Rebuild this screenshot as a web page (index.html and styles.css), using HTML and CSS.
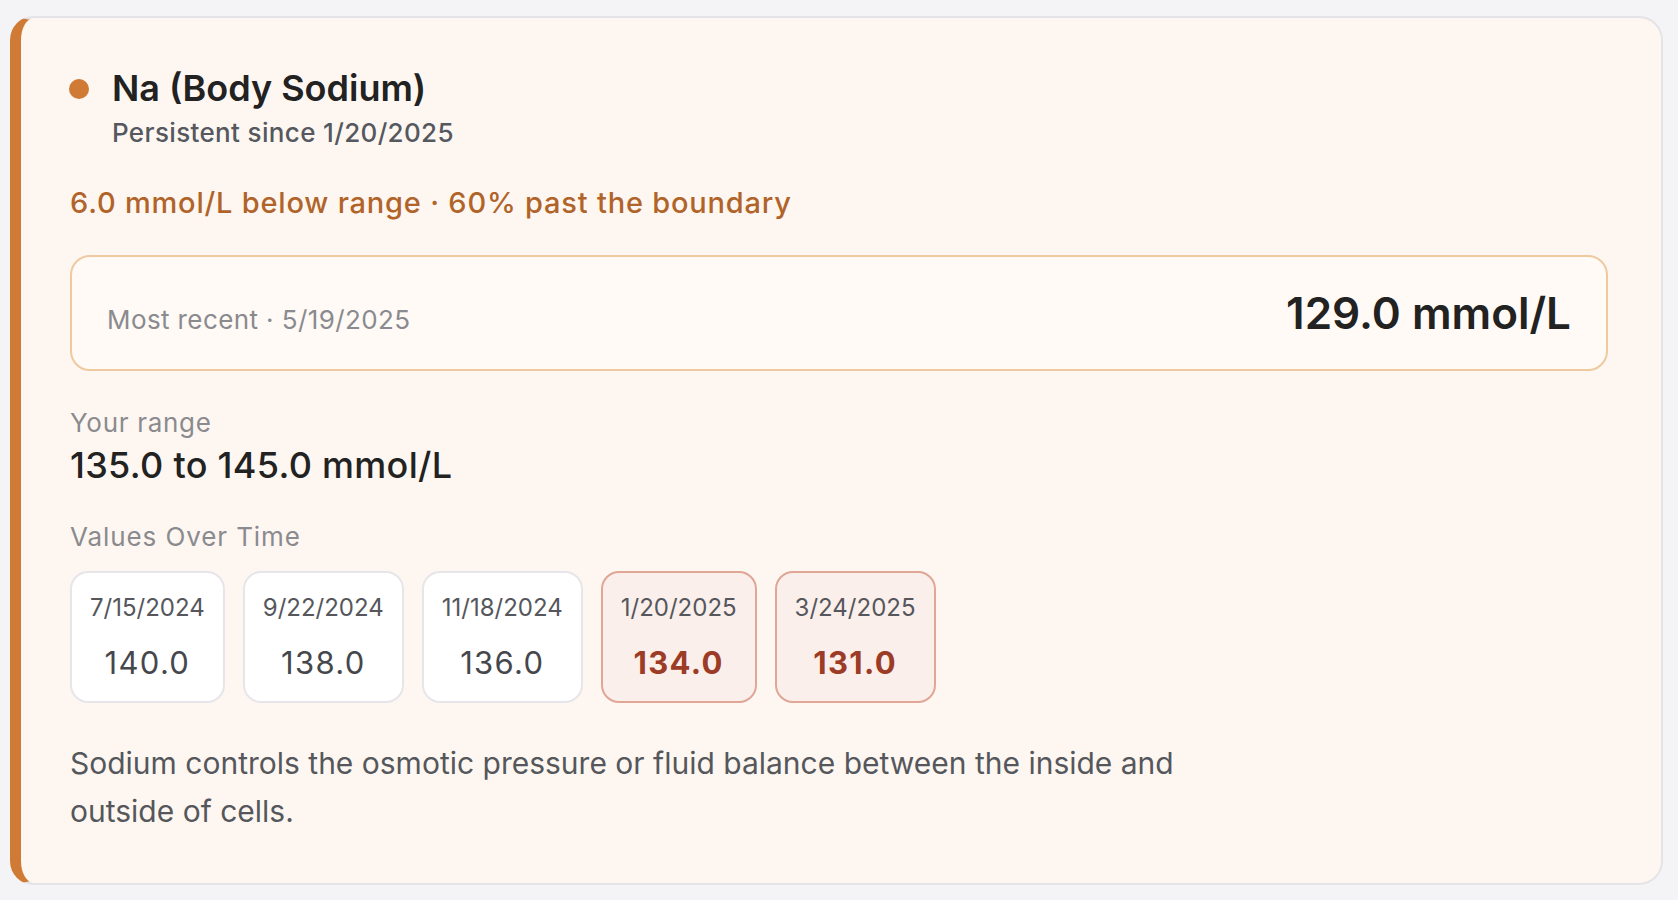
FILE: index.html
```html
<!DOCTYPE html>
<html lang="en">
<head>
<meta charset="utf-8">
<title>Na (Body Sodium)</title>
<link rel="stylesheet" href="styles.css">
</head>
<body>
<main class="page">
  <section class="card">
    <header class="card-head">
      <span class="dot"></span>
      <div class="head-text">
        <h1 class="title">Na (Body Sodium)</h1>
        <p class="subtitle">Persistent since 1/20/2025</p>
      </div>
    </header>
    <p class="alert">6.0 mmol/L below range · 60% past the boundary</p>
    <div class="recent">
      <span class="recent-label">Most recent · 5/19/2025</span>
      <span class="recent-value">129.0 mmol/L</span>
    </div>
    <div class="range">
      <div class="range-label">Your range</div>
      <div class="range-value">135.0 to 145.0 mmol/L</div>
    </div>
    <div class="history">
      <div class="history-label">Values Over Time</div>
      <div class="chips">
        <div class="chip"><span class="chip-date">7/15/2024</span><span class="chip-value">140.0</span></div>
        <div class="chip"><span class="chip-date">9/22/2024</span><span class="chip-value">138.0</span></div>
        <div class="chip"><span class="chip-date">11/18/2024</span><span class="chip-value">136.0</span></div>
        <div class="chip chip-out"><span class="chip-date">1/20/2025</span><span class="chip-value">134.0</span></div>
        <div class="chip chip-out"><span class="chip-date">3/24/2025</span><span class="chip-value">131.0</span></div>
      </div>
    </div>
    <p class="desc">Sodium controls the osmotic pressure or fluid balance between the inside and outside of cells.</p>
  </section>
</main>
</body>
</html>
```

FILE: styles.css
```css
* { box-sizing: border-box; }
html, body { margin: 0; padding: 0; }
body {
  background: #f4f4f6;
  font-family: Inter, "Noto Sans", "Liberation Sans", sans-serif;
  color: #222;
}
.page {
  padding: 16px 15px 15px 10px;
}
.card {
  background: #fef7f1;
  border: 2px solid #e4e4e8;
  border-left: 11px solid #cf7a35;
  border-radius: 24px;
  padding: 48px 53px 47px 49px;
  height: 869px;
}
.card-head {
  display: flex;
  align-items: flex-start;
  gap: 23px;
}
.dot {
  width: 20px;
  height: 20px;
  border-radius: 50%;
  background: #cf7a35;
  margin-top: 13px;
  flex: none;
  margin-left: -1px;
}
.title {
  margin: 0;
  font-size: 36px;
  line-height: 44px;
  font-weight: 600;
  color: #222;
}
.subtitle {
  margin: 6px 0 0;
  font-size: 26px;
  line-height: 34px;
  font-weight: 500;
  color: #55585e;
  letter-spacing: 0.35px;
}
.alert {
  margin: 33px 0 0;
  font-size: 29px;
  line-height: 40px;
  font-weight: 500;
  color: #b0642a;
  letter-spacing: 0.8px;
}
.recent {
  margin-top: 32px;
  display: flex;
  justify-content: space-between;
  align-items: baseline;
  background: #fffaf5;
  border: 2px solid #efc9a0;
  border-radius: 20px;
  padding: 29px 35px;
  height: 116px;
}
.recent-label {
  font-size: 26px;
  line-height: 34px;
  color: #8a8a8f;
  letter-spacing: 0.4px;
}
.recent-value {
  font-size: 44px;
  line-height: 54px;
  font-weight: 600;
  color: #222;
}
.range {
  margin-top: 34px;
}
.range-label {
  font-size: 26px;
  line-height: 36px;
  color: #8a8a8f;
  letter-spacing: 0.7px;
}
.range-value {
  margin-top: 2px;
  font-size: 36px;
  line-height: 44px;
  font-weight: 500;
  color: #222;
  letter-spacing: 0.3px;
}
.history {
  margin-top: 32px;
}
.history-label {
  font-size: 26px;
  line-height: 36px;
  color: #8a8a8f;
  letter-spacing: 0.9px;
}
.chips {
  margin-top: 16px;
  display: flex;
  gap: 18px;
}
.chip {
  display: flex;
  flex-direction: column;
  align-items: center;
  gap: 19px;
  background: #ffffff;
  border: 2px solid #e6e6ea;
  border-radius: 18px;
  padding: 19px 18px 18px;
  height: 132px;
}
.chip-date {
  font-size: 24px;
  line-height: 32px;
  color: #55575c;
}
.chip-value {
  font-size: 31px;
  line-height: 40px;
  font-weight: 400;
  color: #45474c;
  letter-spacing: 1.3px;
}
.chip-out {
  background: #fbefeb;
  border-color: #e0a696;
}
.chip-out .chip-value {
  font-weight: 700;
  color: #9c3b26;
}
.desc {
  margin: 36px 0 0;
  max-width: 1160px;
  font-size: 30px;
  line-height: 48px;
  color: #55575c;
}
```
